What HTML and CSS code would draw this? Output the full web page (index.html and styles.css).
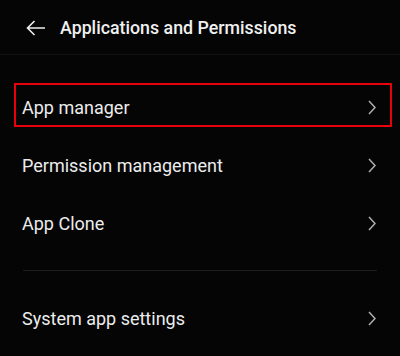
FILE: index.html
```html
<!DOCTYPE html>
<html>
<head>
    <title>Applications and Permissions</title>
    <meta content="text/html;charset=utf-8" http-equiv="Content-Type">
    <link rel="stylesheet" href="styles.css">
</head>
<body>
<div class="header">
    <svg class="back" width="20" height="16" viewBox="0 0 20 16">
        <path d="M19 8H1.5M8.5 1L1.5 8l7 7" fill="none" stroke="#eee" stroke-width="1.6"/>
    </svg>
    <h1>Applications and Permissions</h1>
</div>
<div class="list">
    <div class="item selected">
        <span>App manager</span>
        <svg class="chev" width="8" height="15" viewBox="0 0 8 15"><polyline points="1,1 7,7.5 1,14" fill="none" stroke="#b0b0b0" stroke-width="1.5"/></svg>
    </div>
    <div class="item">
        <span>Permission management</span>
        <svg class="chev" width="8" height="15" viewBox="0 0 8 15"><polyline points="1,1 7,7.5 1,14" fill="none" stroke="#b0b0b0" stroke-width="1.5"/></svg>
    </div>
    <div class="item">
        <span>App Clone</span>
        <svg class="chev" width="8" height="15" viewBox="0 0 8 15"><polyline points="1,1 7,7.5 1,14" fill="none" stroke="#b0b0b0" stroke-width="1.5"/></svg>
    </div>
    <div class="divider"></div>
    <div class="item">
        <span>System app settings</span>
        <svg class="chev" width="8" height="15" viewBox="0 0 8 15"><polyline points="1,1 7,7.5 1,14" fill="none" stroke="#b0b0b0" stroke-width="1.5"/></svg>
    </div>
</div>
</body>
</html>
```
FILE: styles.css
```css
body {
    margin: 0;
    background-color: #050505;
    color: #ececec;
    font-family: Roboto, "Liberation Sans", sans-serif;
    width: 400px;
    height: 356px;
    overflow: hidden;
}

.header {
    display: flex;
    align-items: center;
    height: 54px;
    padding-left: 26px;
    border-bottom: 1px solid #121212;
}

.header h1 {
    margin: 0 0 0 14px;
    font-size: 17.8px;
    font-weight: 500;
    color: #f0f0f0;
}

.back {
    margin-top: 2px;
}

.list {
    padding-top: 23px;
}

.item {
    position: relative;
    display: flex;
    align-items: center;
    justify-content: space-between;
    height: 58px;
    padding: 0 24px 0 22px;
    font-size: 18px;
}

.item span {
    margin-top: 1px;
}

.chev {
    margin-top: 1px;
}

.selected::after {
    content: "";
    position: absolute;
    top: 5px;
    left: 14px;
    right: 8px;
    height: 40px;
    border: 2px solid #e8000b;
}

.divider {
    height: 1px;
    margin: 18px 23px;
    background-color: #1c1c1c;
}
```
